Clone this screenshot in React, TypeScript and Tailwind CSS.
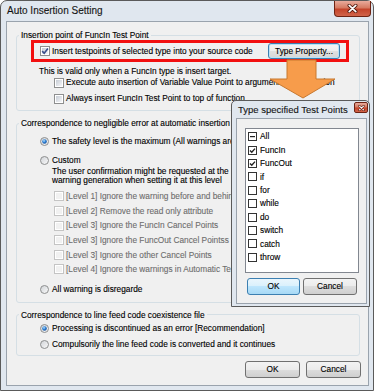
import React from "react";

function Defs() {
  return (
    <svg width="0" height="0" className="absolute">
      <defs>
        <linearGradient id="cbIn" x1="0" y1="0" x2="1" y2="1">
          <stop offset="0" stopColor="#c6ccd4" />
          <stop offset="1" stopColor="#f5f6f8" />
        </linearGradient>
        <linearGradient id="rbIn" x1="0" y1="0" x2="1" y2="1">
          <stop offset="0" stopColor="#cfd2d6" />
          <stop offset="1" stopColor="#fbfbfb" />
        </linearGradient>
        <radialGradient id="rbDot" cx="0.4" cy="0.35" r="0.7">
          <stop offset="0" stopColor="#b4e2ff" />
          <stop offset="0.5" stopColor="#2f80d4" />
          <stop offset="1" stopColor="#164d96" />
        </radialGradient>
      </defs>
    </svg>
  );
}

function Cb({ checked, disabled }: { checked?: boolean; disabled?: boolean }) {
  return (
    <svg width="10" height="10" viewBox="0 0 10 10" className="shrink-0">
      <rect x="0.5" y="0.5" width="9" height="9" fill="#fff" stroke={disabled ? "#c4c4c4" : "#8e8f8f"} />
      <rect x="2" y="2" width="6" height="6" fill={disabled ? "#f1f1f1" : "url(#cbIn)"} />
      {checked && (
        <path d="M2.2 5.1 L4.2 7.3 L7.9 2.5" fill="none" stroke="#3b4f8c" strokeWidth="1.6" />
      )}
    </svg>
  );
}

function Rb({ checked }: { checked?: boolean }) {
  return (
    <svg width="9" height="9" viewBox="0 0 9 9" className="shrink-0">
      <circle cx="4.5" cy="4.5" r="4" fill="url(#rbIn)" stroke="#8e8f8f" />
      {checked && <circle cx="4.5" cy="4.5" r="2.3" fill="url(#rbDot)" />}
    </svg>
  );
}

function FlatCb({ state }: { state: "on" | "off" | "mixed" }) {
  return (
    <svg width="9" height="9" viewBox="0 0 9 9" className="shrink-0">
      <rect x="0.5" y="0.5" width="8" height="8" fill="#fff" stroke="#333" />
      {state === "on" && (
        <path d="M2 4.4 L3.8 6.3 L7 2.6" fill="none" stroke="#222" strokeWidth="1.4" />
      )}
      {state === "mixed" && <rect x="2" y="4" width="5" height="1.2" fill="#222" />}
    </svg>
  );
}

function XGlyph({ w, h }: { w: number; h: number }) {
  return (
    <svg width={w} height={h} viewBox="0 0 10 8">
      <path d="M2 1.2 L8 6.8 M8 1.2 L2 6.8" stroke="#4a1208" strokeWidth="3" strokeLinecap="round" />
      <path d="M2 1.2 L8 6.8 M8 1.2 L2 6.8" stroke="#fff" strokeWidth="1.6" strokeLinecap="round" />
    </svg>
  );
}

const btnGray =
  "flex items-center justify-center h-[17px] rounded-[3px] border border-[#707070] bg-[linear-gradient(to_bottom,#f3f3f3_0%,#ebebeb_50%,#dddddd_50%,#cfcfcf_100%)] text-black";
const btnFocus =
  "flex items-center justify-center h-[16px] rounded-[3px] border border-[#3c7fb1] shadow-[inset_0_0_0_1px_#b9e2f7] bg-[linear-gradient(to_bottom,#f5f5f5_0%,#eeeeee_50%,#e0e0e0_50%,#d6d6d6_100%)] text-black";
const btnBlue =
  "flex items-center justify-center h-[17px] rounded-[3px] border border-[#3c7fb1] bg-[linear-gradient(to_bottom,#eaf6fd_0%,#d9f0fc_50%,#bee6fd_50%,#a7d9f5_100%)] text-black";

const levels = [
  "[Level 1] Ignore the warning before and behin",
  "[Level 2] Remove the read only attribute",
  "[Level 3] Ignore the FuncIn Cancel Points",
  "[Level 3] Ignore the FuncOut Cancel Pointss",
  "[Level 3] Ignore the other Cancel Points",
  "[Level 4] Ignore the warnings in Automatic Tes",
];

const items: { t: string; s: "on" | "off" | "mixed" }[] = [
  { t: "All", s: "mixed" },
  { t: "FuncIn", s: "on" },
  { t: "FuncOut", s: "on" },
  { t: "if", s: "off" },
  { t: "for", s: "off" },
  { t: "while", s: "off" },
  { t: "do", s: "off" },
  { t: "switch", s: "off" },
  { t: "catch", s: "off" },
  { t: "throw", s: "off" },
];

export default function App() {
  return (
    <div className="relative w-[374px] h-[391px] overflow-hidden bg-white font-['Liberation_Sans',Arial,sans-serif] text-[8.3px] text-black [-webkit-text-stroke:0.12px_#000]">
      <Defs />
      {/* Main window */}
      <div className="flex flex-col w-full h-full border border-[#5a5a5a] rounded-t-[7px] bg-[#e0e7ef]">
        <div className="flex h-[20px] shrink-0 justify-between pl-[6px] pr-[2px]">
          <span className="self-center text-[10px] leading-none text-[#1a1a1a]">Auto Insertion Setting</span>
          <div className="flex items-center justify-center w-[37px] h-[16px] rounded-b-[4px] border border-t-0 border-[#6e2313] bg-[linear-gradient(to_bottom,#e9ab9c_0%,#d57a62_45%,#c4442b_55%,#d0644a_100%)]">
            <XGlyph w={11} h={9} />
          </div>
        </div>
        <div className="flex-1 flex flex-col pl-[5px] pr-[4px] pb-[4px]">
          <div className="flex-1 flex flex-col border border-[#9aa3ad] bg-[#f0f0f0]">
            {/* Group 1 */}
            <fieldset className="mt-[8px] ml-[9px] mr-[8px] pb-[6px] border border-[#d5dfe5] rounded-[3px] overflow-hidden min-w-0">
              <legend className="ml-[2px] px-[2px] leading-[10px]">Insertion point of FuncIn Test Point</legend>
              <div className="ml-[14px] w-[318px] h-[22px] border-[3px] border-[#f21010] flex items-center justify-between pl-[6px] pr-[6px]">
                <div className="flex items-center gap-[2px] whitespace-nowrap">
                  <Cb checked />
                  <span>Insert testpoints of selected type into your source code</span>
                </div>
                <div className={btnFocus + " w-[72px]"}>Type Property...</div>
              </div>
              <div className="mt-[4px] ml-[22px] leading-[11px] whitespace-nowrap">
                This is valid only when a FuncIn type is insert target.
              </div>
              <div className="ml-[37px] h-[11px] flex items-center gap-[2px] whitespace-nowrap">
                <Cb />
                <span>Execute auto insertion of Variable Value Point to argument of the function</span>
              </div>
              <div className="mt-[5px] ml-[37px] h-[11px] flex items-center gap-[2px] whitespace-nowrap">
                <Cb />
                <span>Always insert FuncIn Test Point to top of function</span>
              </div>
            </fieldset>

            {/* Group 2 */}
            <fieldset className="mt-[7px] ml-[9px] mr-[8px] pb-[7px] border border-[#d5dfe5] rounded-[3px] overflow-hidden min-w-0">
              <legend className="ml-[2px] px-[2px] leading-[10px]">
                Correspondence to negligible error at automatic insertion
              </legend>
              <div className="mt-[8px] ml-[23px] h-[11px] flex items-center gap-[3px] whitespace-nowrap">
                <Rb checked />
                <span>The safety level is the maximum (All warnings are</span>
              </div>
              <div className="mt-[8px] ml-[23px] h-[11px] flex items-center gap-[3px] whitespace-nowrap">
                <Rb />
                <span>Custom</span>
              </div>
              <div className="mt-[0.8px] ml-[35px] leading-[9.6px] whitespace-nowrap">
                <div>The user confirmation might be requested at the</div>
                <div>warning generation when setting it at this level</div>
              </div>
              <div className="mt-[5px] ml-[37px] flex flex-col gap-[3.6px]">
                {levels.map((l) => (
                  <div key={l} className="h-[11px] flex items-center gap-[2px] whitespace-nowrap text-[#6d6d6d] [-webkit-text-stroke:0.1px_#6d6d6d]">
                    <Cb disabled />
                    <span>{l}</span>
                  </div>
                ))}
              </div>
              <div className="mt-[9px] ml-[23px] h-[11px] flex items-center gap-[3px] whitespace-nowrap">
                <Rb />
                <span>All warning is disregarde</span>
              </div>
            </fieldset>

            {/* Group 3 */}
            <fieldset className="mt-[7px] ml-[9px] mr-[8px] pb-[5px] border border-[#d5dfe5] rounded-[3px] overflow-hidden min-w-0">
              <legend className="ml-[2px] px-[2px] leading-[10px]">Correspondence to line feed code coexistence file</legend>
              <div className="mt-[3px] ml-[23px] h-[11px] flex items-center gap-[3px] whitespace-nowrap">
                <Rb checked />
                <span>Processing is discontinued as an error [Recommendation]</span>
              </div>
              <div className="mt-[5px] ml-[23px] h-[11px] flex items-center gap-[3px] whitespace-nowrap">
                <Rb />
                <span>Compulsorily the line feed code is converted and it continues</span>
              </div>
            </fieldset>

            <div className="mt-[5px] flex justify-end gap-[6px] pr-[7px]">
              <div className={btnGray + " w-[55px]"}>OK</div>
              <div className={btnGray + " w-[55px]"}>Cancel</div>
            </div>
          </div>
        </div>
      </div>

      {/* Arrow */}
      <svg width="70" height="42" viewBox="0 0 70 42" className="absolute left-[268px] top-[58px]">
        <polygon
          points="19,2 48,2 48,21 67,21 35,40 2,21 19,21"
          fill="#f79c4b"
          stroke="#c8782f"
          strokeWidth="1"
          strokeLinejoin="round"
        />
      </svg>

      {/* Popup */}
      <div className="absolute left-[231px] top-[100px] w-[139px] h-[207px] flex flex-col border border-[#5a5a5a] rounded-t-[5px] bg-[#e0e7ef]">
        <div className="flex h-[17px] shrink-0 justify-between pl-[6px] pr-[1px]">
          <span className="self-center text-[9.5px] leading-none text-[#1a1a1a] whitespace-nowrap">
            Type specified Test Points
          </span>
          <div className="mt-[1px] flex items-center justify-center w-[14px] h-[11px] rounded-[2px] border border-[#6e2313] bg-[linear-gradient(to_bottom,#e9ab9c_0%,#d57a62_45%,#c4442b_55%,#d0644a_100%)]">
            <XGlyph w={7} h={6} />
          </div>
        </div>
        <div className="flex-1 flex flex-col pl-[4px] pr-[2px] pb-[2px]">
          <div className="flex-1 flex flex-col border border-[#9aa3ad] bg-[#f0f0f0]">
            <div className="ml-[8px] mt-[9px] w-[114px] h-[145px] border border-[#828790] bg-white pt-[1px] pl-[2px] flex flex-col">
              {items.map((it) => (
                <div key={it.t} className="h-[13.4px] flex items-center gap-[3px] whitespace-nowrap">
                  <FlatCb state={it.s} />
                  <span>{it.t}</span>
                </div>
              ))}
            </div>
            <div className="ml-[10px] mt-[5px] flex gap-[3px]">
              <div className={btnBlue + " w-[53px]"}>OK</div>
              <div className={btnGray + " w-[54px]"}>Cancel</div>
            </div>
          </div>
        </div>
      </div>
    </div>
  );
}
